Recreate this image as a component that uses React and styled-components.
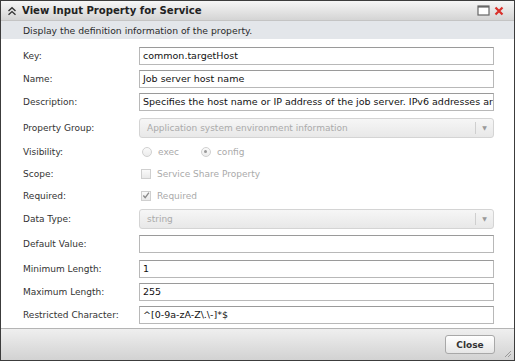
import styled, { createGlobalStyle } from 'styled-components';

const GlobalStyle = createGlobalStyle`
  body {
    margin: 0;
    background: #ffffff;
    font-family: "DejaVu Sans", Verdana, sans-serif;
  }
`;

const Dialog = styled.div`
  width: 515px;
  height: 361px;
  box-sizing: border-box;
  border: 1px solid #3c3c3c;
  display: flex;
  flex-direction: column;
  background: #fff;
`;

const TitleBar = styled.div`
  height: 19px;
  display: flex;
  align-items: center;
  padding: 0 10px 0 6px;
  background: linear-gradient(#f6f6f6, #d4d4d4);
  border-bottom: 1px solid #c4c4c4;
`;

const Title = styled.div`
  flex: 1;
  display: flex;
  align-items: center;
  gap: 5px;
  font-size: 10.1px;
  font-weight: bold;
  color: #222;
`;

const TitleButtons = styled.div`
  display: flex;
  align-items: center;
  gap: 4px;
`;

const Subtitle = styled.div`
  height: 18px;
  display: flex;
  align-items: center;
  padding-left: 22px;
  background: #e3e6ea;
  font-size: 9.25px;
  color: #2a2a2a;
`;

const Body = styled.div`
  flex: 1;
  padding: 5px 20px 0 22px;
`;

const Row = styled.div`
  height: ${p => p.h}px;
  display: grid;
  grid-template-columns: 116px 1fr;
  align-items: center;
`;

const Label = styled.div`
  font-size: 9px;
  color: #333;
`;

const TextBox = styled.div`
  height: 18px;
  box-sizing: border-box;
  border: 1px solid #b8b8b8;
  border-top-color: #9a9a9a;
  background: #fff;
  padding: 0 3px;
  display: flex;
  align-items: center;
  font-size: 9.5px;
  color: #111;
  white-space: nowrap;
  overflow: hidden;
`;

const Select = styled.div`
  height: 20px;
  box-sizing: border-box;
  border: 1px solid #d4d4d4;
  border-radius: 3px;
  background: linear-gradient(#f6f6f6, #e8e8e8);
  display: flex;
  align-items: center;
  font-size: 9px;
  color: #aaa;
`;

const SelectText = styled.div`
  flex: 1;
  padding-left: 7px;
`;

const SelectArrow = styled.div`
  width: 17px;
  height: 12px;
  border-left: 1px solid #cfcfcf;
  display: flex;
  align-items: center;
  justify-content: center;
  font-size: 6px;
  color: #999;
`;

const Options = styled.div`
  display: flex;
  align-items: center;
  gap: 6px;
  font-size: 9px;
  color: #aaa;
`;

const Radio = styled.span`
  width: 10px;
  height: 10px;
  box-sizing: border-box;
  border-radius: 50%;
  border: 1px solid #d0d0d0;
  background: linear-gradient(#fafafa, #ececec);
  display: inline-flex;
  align-items: center;
  justify-content: center;
  margin-left: ${p => p.gap || 3}px;
  &::after {
    content: '';
    width: 3px;
    height: 3px;
    border-radius: 50%;
    background: ${p => (p.checked ? '#9a9a9a' : 'transparent')};
  }
`;

const Check = styled.span`
  width: 10px;
  height: 10px;
  box-sizing: border-box;
  border: 1px solid #cfcfcf;
  background: linear-gradient(#fafafa, #e9e9e9);
  margin-left: 2px;
  display: inline-flex;
  align-items: center;
  justify-content: center;
`;

const Footer = styled.div`
  height: 31px;
  border-top: 1px solid #b4b4b4;
  background: linear-gradient(#efefef, #d2d2d2);
  display: flex;
  align-items: center;
  justify-content: flex-end;
  padding-right: 19px;
  position: relative;
`;

const Button = styled.button`
  width: 50px;
  height: 19px;
  border: 1px solid #a8a8a8;
  border-radius: 3px;
  background: linear-gradient(#ffffff, #e6e6e6);
  font-family: "DejaVu Sans", Verdana, sans-serif;
  font-size: 9px;
  font-weight: bold;
  color: #333;
  padding: 0;
`;

const Grip = styled.svg`
  position: absolute;
  right: 2px;
  bottom: 2px;
`;

const Chevrons = () => (
  <svg width="10" height="10" viewBox="0 0 10 10">
    <path d="M1.5 5 L5 1.8 L8.5 5 M1.5 8.8 L5 5.6 L8.5 8.8" fill="none" stroke="#333" strokeWidth="1.4" />
  </svg>
);

const MaxIcon = () => (
  <svg width="13" height="11" viewBox="0 0 13 11">
    <rect x="1" y="1" width="11" height="9" fill="#fff" stroke="#666" strokeWidth="1.2" />
    <rect x="1" y="1" width="11" height="1.6" fill="#666" />
  </svg>
);

const CloseIcon = () => (
  <svg width="10" height="10" viewBox="0 0 10 10">
    <path d="M1.5 1.5 L8.5 8.5 M8.5 1.5 L1.5 8.5" stroke="#d9302a" strokeWidth="2.2" />
  </svg>
);

const Tick = () => (
  <svg width="9" height="9" viewBox="0 0 9 9">
    <path d="M1.5 4.5 L3.6 7 L7.8 1.2" fill="none" stroke="#8a8a8a" strokeWidth="1.5" />
  </svg>
);

const Dropdown = ({ value }) => (
  <Select>
    <SelectText>{value}</SelectText>
    <SelectArrow>▼</SelectArrow>
  </Select>
);

export default function App() {
  return (
    <>
      <GlobalStyle />
      <Dialog>
        <TitleBar>
          <Title>
            <Chevrons />
            View Input Property for Service
          </Title>
          <TitleButtons>
            <MaxIcon />
            <CloseIcon />
          </TitleButtons>
        </TitleBar>
        <Subtitle>Display the definition information of the property.</Subtitle>
        <Body>
          <Row h={23}>
            <Label>Key:</Label>
            <TextBox>common.targetHost</TextBox>
          </Row>
          <Row h={23}>
            <Label>Name:</Label>
            <TextBox>Job server host name</TextBox>
          </Row>
          <Row h={23}>
            <Label>Description:</Label>
            <TextBox>Specifies the host name or IP address of the job server. IPv6 addresses are not supported.</TextBox>
          </Row>
          <Row h={29}>
            <Label>Property Group:</Label>
            <Dropdown value="Application system environment information" />
          </Row>
          <Row h={19}>
            <Label>Visibility:</Label>
            <Options>
              <Radio />
              exec
              <Radio checked gap={16} />
              config
            </Options>
          </Row>
          <Row h={25}>
            <Label>Scope:</Label>
            <Options>
              <Check />
              Service Share Property
            </Options>
          </Row>
          <Row h={19}>
            <Label>Required:</Label>
            <Options>
              <Check>
                <Tick />
              </Check>
              Required
            </Options>
          </Row>
          <Row h={27}>
            <Label>Data Type:</Label>
            <Dropdown value="string" />
          </Row>
          <Row h={23}>
            <Label>Default Value:</Label>
            <TextBox />
          </Row>
          <Row h={27}>
            <Label>Minimum Length:</Label>
            <TextBox>1</TextBox>
          </Row>
          <Row h={19}>
            <Label>Maximum Length:</Label>
            <TextBox>255</TextBox>
          </Row>
          <Row h={27}>
            <Label>Restricted Character:</Label>
            <TextBox>^[0-9a-zA-Z\.\-]*$</TextBox>
          </Row>
        </Body>
        <Footer>
          <Button>Close</Button>
          <Grip width="8" height="8" viewBox="0 0 8 8">
            <path d="M1 7 L7 1 M4 7 L7 4" stroke="#999" strokeWidth="1" />
          </Grip>
        </Footer>
      </Dialog>
    </>
  );
}
